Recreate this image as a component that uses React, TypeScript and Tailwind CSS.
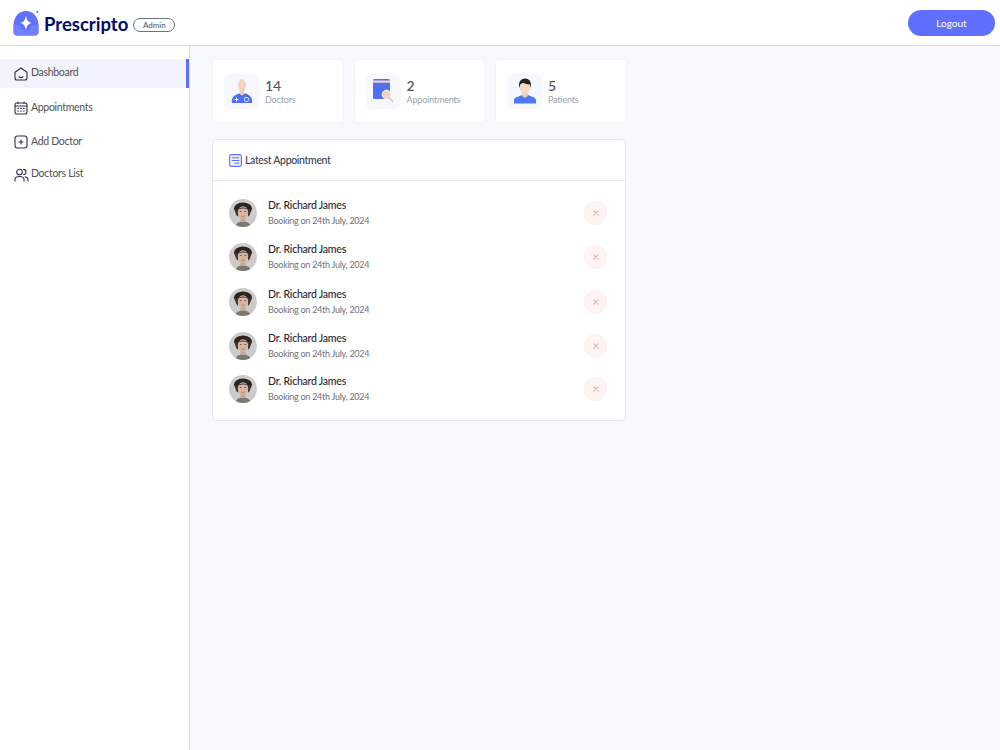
import React from "react";

function Logo() {
  return (
    <svg width="26" height="26" viewBox="0 0 26 26" className="shrink-0">
      <path d="M0.5 15.5 C0.5 7 6 1 13 1 C20 1 25.5 7 25.5 15.5 L25.5 22 C25.5 24 24 25.5 22 25.5 L4 25.5 C2 25.5 0.5 24 0.5 22 Z" fill="#5F6FFF" />
      <path d="M0.5 15.5 L7.5 15.5 C8 18 8.5 19.5 12.4 20.5 L12.4 25.5 L4 25.5 C2 25.5 0.5 24 0.5 22 Z" fill="#7280FF" />
      <path d="M25.5 15.5 L18.5 15.5 C18 18 17.5 19.5 13.6 20.5 L13.6 25.5 L22 25.5 C24 25.5 25.5 24 25.5 22 Z" fill="#7280FF" />
      <path d="M13 5 C13.6 10.2 15 12.2 19.2 13 C15 13.8 13.6 15.8 13 21 C12.4 15.8 11 13.8 6.8 13 C11 12.2 12.4 10.2 13 5 Z" fill="#fff" />
      <circle cx="24.3" cy="1.8" r="1.1" fill="#5F6FFF" />
    </svg>
  );
}

function Home() {
  return (
    <svg width="14" height="14" viewBox="0 0 14 14" fill="none" stroke="#2A2F55" strokeWidth="1.1" strokeLinecap="round" strokeLinejoin="round">
      <path d="M1 5.2 L7 1 L13 5.2 L13 11 C13 12.2 12.2 13 11 13 L3 13 C1.8 13 1 12.2 1 11 Z" />
      <path d="M5 9.8 C6 10.6 8 10.6 9 9.8" />
    </svg>
  );
}

function Calendar() {
  return (
    <svg width="14" height="14" viewBox="0 0 14 14" fill="none" stroke="#2A2F55" strokeWidth="1.1" strokeLinecap="round">
      <rect x="1" y="2" width="12" height="11" rx="2" />
      <path d="M1 5 H13 M4 1 V2.5 M10 1 V2.5" />
      <path d="M3.8 7.3 H4.6 M6.6 7.3 H7.4 M9.4 7.3 H10.2 M3.8 10 H4.6 M6.6 10 H7.4 M9.4 10 H10.2" strokeWidth="1.2" />
    </svg>
  );
}

function AddBox() {
  return (
    <svg width="14" height="14" viewBox="0 0 14 14" fill="none" stroke="#2A2F55" strokeWidth="1.1" strokeLinecap="round">
      <rect x="1" y="1" width="12" height="12" rx="2.5" />
      <path d="M7 5 V9 M5 7 H9" />
    </svg>
  );
}

function People() {
  return (
    <svg width="15" height="14" viewBox="0 0 15 14" fill="none" stroke="#2A2F55" strokeWidth="1.1" strokeLinecap="round">
      <circle cx="5.5" cy="4" r="2.8" />
      <path d="M1 13 V11.5 C1 9.6 2.6 8.5 5.5 8.5 C8.4 8.5 10 9.6 10 11.5 V13" />
      <path d="M9.5 1.4 C11.4 1.6 12.1 3 12 4.2 C11.9 5.4 11 6.4 9.8 6.6" />
      <path d="M11.2 8.8 C13 9.2 14 10.2 14 11.8 V13" />
    </svg>
  );
}

function DoctorIcon() {
  return (
    <svg width="22" height="26" viewBox="0 0 22 26">
      <ellipse cx="11" cy="7" rx="4" ry="6" fill="#F3D6C2" />
      <rect x="8.5" y="10" width="5" height="7" fill="#EFCDB6" />
      <path d="M1 25 C0 20 3 17 8 15.5 L11 17.5 L14 15.5 C19 17 22 20 21 25 Z" fill="#4F6FF5" />
      <path d="M3.5 21.5 H7.5 M5.5 19.5 V23.5" stroke="#fff" strokeWidth="1" />
      <circle cx="15.5" cy="21.5" r="2.2" fill="none" stroke="#fff" strokeWidth="0.8" />
      <path d="M15 15.5 L17.5 19" stroke="#2F46B8" strokeWidth="0.7" />
    </svg>
  );
}

function BookIcon() {
  return (
    <svg width="20" height="24" viewBox="0 0 20 24">
      <rect x="0" y="0" width="17" height="20" rx="1.5" fill="#4F6FF5" />
      <rect x="0" y="1.5" width="17" height="2.2" fill="#F5D5BD" />
      <circle cx="13.5" cy="15.5" r="4.4" fill="#F5D5BD" stroke="#fff" strokeWidth="0.8" />
      <path d="M16.5 19 L19.5 22.5" stroke="#F0C8AC" strokeWidth="1.6" strokeLinecap="round" />
    </svg>
  );
}

function PatientIcon() {
  return (
    <svg width="24" height="26" viewBox="0 0 24 26">
      <path d="M1 25.5 V21.5 C2 19 6 18.5 9 17 L15 17 C18 18.5 22 19 23 21.5 V25.5 Z" fill="#4F78F5" />
      <path d="M9 14 H15 V18 L12 20 L9 18 Z" fill="#EFC9B0" />
      <ellipse cx="12" cy="9.5" rx="5.2" ry="7" fill="#F6D8C4" />
      <path d="M6.3 10 C5 4 8 0.5 12 0.5 C16.5 0.5 19 4 17.7 10 L17 6.5 C14 6.5 11 5.5 9.5 4.8 C8.5 6 7.3 6.5 7 7 Z" fill="#1F1F25" />
    </svg>
  );
}

function ListIcon() {
  return (
    <svg width="13" height="13" viewBox="0 0 13 13" fill="none" stroke="#5F6FFF" strokeWidth="1.1" strokeLinecap="round">
      <rect x="0.6" y="0.6" width="11.8" height="11.8" rx="1.6" fill="#EEF0FF" />
      <path d="M3.2 3.8 H9.8 M3.2 6.5 H9.8 M6 9.2 H9.8" />
    </svg>
  );
}

function Avatar() {
  return (
    <svg width="28" height="28" viewBox="0 0 28 28" className="shrink-0">
      <defs>
        <clipPath id="av"><circle cx="14" cy="14" r="14" /></clipPath>
      </defs>
      <g clipPath="url(#av)">
        <rect width="28" height="28" fill="#CBCBCB" />
        <path d="M6 28 C7 24 10 22.5 14 22.5 C18 22.5 21 24 22 28 Z" fill="#7D786E" />
        <rect x="11.5" y="17" width="5" height="6" fill="#C9A692" />
        <ellipse cx="14" cy="9.5" rx="9" ry="6" fill="#2C2420" />
        <path d="M6 10 C6 14 7.5 17 9 17.5 L9 10 Z M22 10 C22 14 20.5 17 19 17.5 L19 10 Z" fill="#3F322A" />
        <ellipse cx="14" cy="13.5" rx="5.2" ry="6.3" fill="#D6B5A0" />
        <path d="M10.8 12.5 H12.6 M15.4 12.5 H17.2" stroke="#5A4438" strokeWidth="0.8" />
        <path d="M12.2 16.8 C13.3 17.6 14.7 17.6 15.8 16.8" stroke="#9A6E60" strokeWidth="0.7" fill="none" />
        <path d="M8.8 11 C10 7.5 18 7.5 19.2 11 C18 9 10 9 8.8 11 Z" fill="#2C2420" />
      </g>
    </svg>
  );
}

function Cancel() {
  return (
    <div className="w-[23px] h-6 rounded-full bg-[#FEF4F3] border border-[#FDEFEE] flex items-center justify-center shrink-0">
      <svg width="6" height="6" viewBox="0 0 6 6" stroke="#F9A8A4" strokeWidth="1.1" strokeLinecap="round">
        <path d="M0.8 0.8 L5.2 5.2 M5.2 0.8 L0.8 5.2" />
      </svg>
    </div>
  );
}

const stats = [
  { n: "14", l: "Doctors", icon: <DoctorIcon /> },
  { n: "2", l: "Appointments", icon: <BookIcon /> },
  { n: "5", l: "Patients", icon: <PatientIcon /> },
];

const rows = ["h-[44px]", "h-[44px]", "h-[45px]", "h-[43px]", "h-[44px]"];

export default function App() {
  return (
    <div className="h-[750px] overflow-hidden bg-[#F8F9FD] font-['Lato','Liberation_Sans',sans-serif] flex flex-col">
      <header className="h-[46px] shrink-0 bg-white border-b border-[#DADADA] flex items-center justify-between pl-[13px] pr-[5px]">
        <div className="flex items-center">
          <div className="mt-[1px]"><Logo /></div>
          <span className="ml-[5px] mt-[3px] text-[18.5px] leading-none font-bold text-[#000B6D]">Prescripto</span>
          <span className="ml-[5px] mt-[5px] h-[14px] w-[42px] rounded-full border border-[#6B7280] text-[8px] text-[#4B5563] flex items-center justify-center">Admin</span>
        </div>
        <button className="w-[87px] h-[26px] rounded-full bg-[#5F6FFF] text-white text-[10px] mt-[1px]">Logout</button>
      </header>
      <div className="flex flex-1 min-h-0">
        <aside className="w-[190px] shrink-0 bg-white border-r border-[#DADADA] pt-[13px] text-[10.5px] tracking-[-0.3px] text-[#515151]">
          <div className="h-[29px] bg-[#F2F3FF] border-r-[3px] border-[#5F6FFF] flex items-center gap-[3px] pl-[14px]"><Home /><span className="-mt-[1px]">Dashboard</span></div>
          <div className="h-[29px] mt-[5px] flex items-center gap-[3px] pl-[14px]"><Calendar /><span>Appointments</span></div>
          <div className="h-[29px] mt-[5px] flex items-center gap-[3px] pl-[14px]"><AddBox /><span>Add Doctor</span></div>
          <div className="h-[29px] mt-[4px] flex items-center gap-[2px] pl-[14px]"><People /><span className="-mt-[1px]">Doctors List</span></div>
        </aside>
        <main className="flex-1 pl-[22px] pt-[13px]">
          <div className="flex gap-[10px]">
            {stats.map((s) => (
              <div key={s.l} className="w-[131.5px] h-[64px] bg-white rounded border border-[#F3F4F6] flex items-center pl-[11px] gap-[6px]">
                <div className="w-[35px] h-[35px] rounded-md bg-[#F6F8FE] flex items-center justify-center">{s.icon}</div>
                <div className="flex flex-col -mt-[1px]">
                  <span className="text-[14px] leading-[17px] font-medium text-[#4B5563]">{s.n}</span>
                  <span className="text-[9px] tracking-[-0.17px] leading-[11px] text-[#9CA3AF]">{s.l}</span>
                </div>
              </div>
            ))}
          </div>
          <div className="w-[414px] h-[282px] mt-[16px] bg-white rounded-sm border border-[#E5E7EB]">
            <div className="h-[41px] border-b border-[#E5E7EB] flex items-center gap-[3px] pl-[16px]">
              <ListIcon />
              <span className="mt-[1px] text-[10.5px] tracking-[-0.33px] font-medium text-[#374151]">Latest Appointment</span>
            </div>
            <div className="pt-[10px]">
              {rows.map((h, i) => (
                <div key={i} className={`${h} flex items-center pl-[16px] pr-[18px]`}>
                  <Avatar />
                  <div className="ml-[11px] -mt-[1px] flex-1 flex flex-col gap-[4px]">
                    <span className="text-[10.5px] tracking-[-0.23px] leading-[12px] font-medium text-[#1F2937]">Dr. Richard James</span>
                    <span className="text-[9px] tracking-[-0.27px] leading-[11px] text-[#6B7280]">Booking on 24th July, 2024</span>
                  </div>
                  <Cancel />
                </div>
              ))}
            </div>
          </div>
        </main>
      </div>
    </div>
  );
}
